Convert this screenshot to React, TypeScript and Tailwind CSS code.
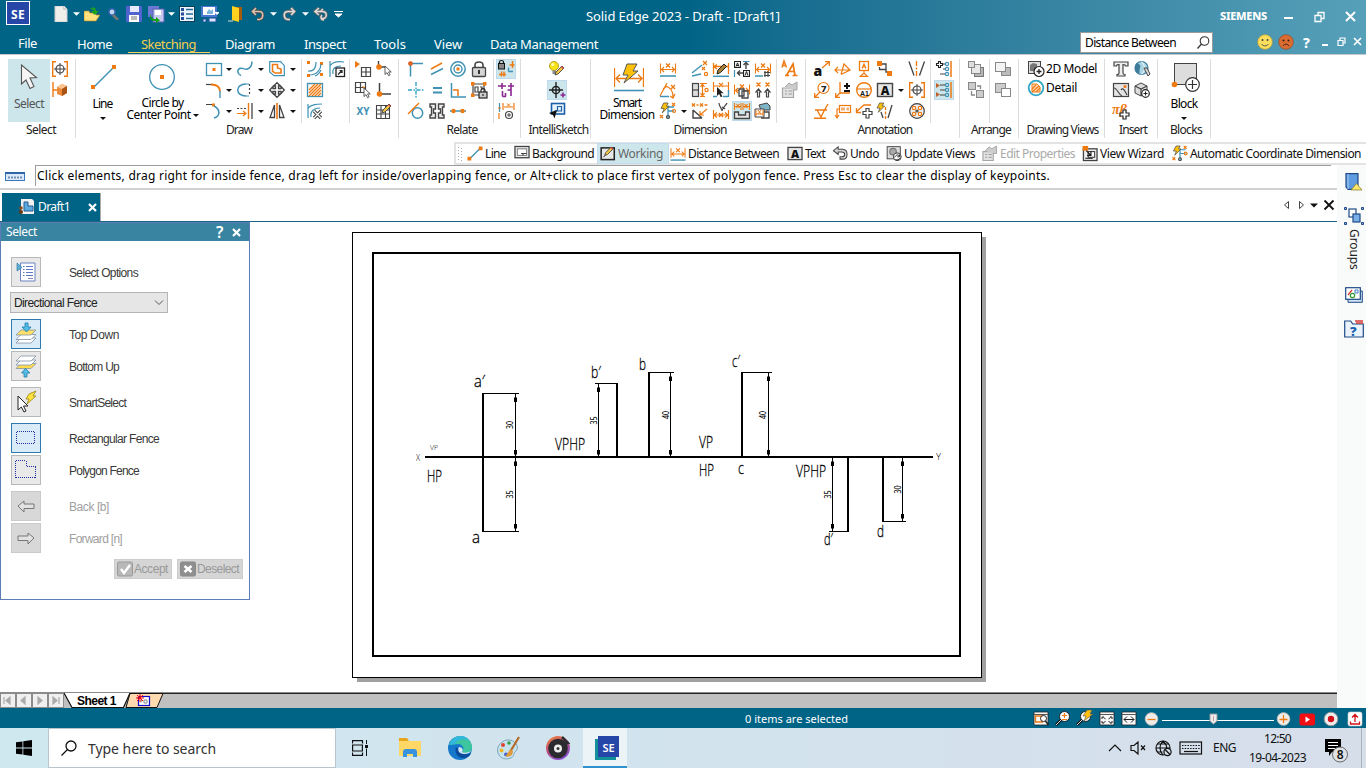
import React, { useLayoutEffect, useRef, useState } from "react";

const O = "#ee7a12";
const B = "#3f92b5";
const K = "#444444";

/* Label that adjusts its letter spacing so that it takes up `w` pixels. */
function Fit({ w, children, className = "" }: { w: number; children: string; className?: string }) {
  const ref = useRef<HTMLSpanElement>(null);
  const [sp, setSp] = useState(0);
  useLayoutEffect(() => {
    if (ref.current) {
      const natural = ref.current.getBoundingClientRect().width;
      setSp((w - natural) / children.length);
    }
  }, [w, children]);
  return (
    <span ref={ref} className={`inline-block whitespace-pre ${className}`} style={{ letterSpacing: sp }}>
      {children}
    </span>
  );
}

type PP = { d: string; c?: string; f?: string; w?: number; dash?: string };
const P = ({ d, c = B, f = "none", w = 1.2, dash }: PP) => (
  <path d={d} stroke={c} fill={f} strokeWidth={w} strokeDasharray={dash} />
);
const F = ({ d, c = O }: { d: string; c?: string }) => <path d={d} fill={c} />;
const C = ({ x, y, r, c = B, f = "none", w = 1.2 }: { x: number; y: number; r: number; c?: string; f?: string; w?: number }) => (
  <circle cx={x} cy={y} r={r} stroke={c} fill={f} strokeWidth={w} />
);

const CURSOR = "M0 0v10l2.4-2.2 1.8 3.6 1.8-.9-1.8-3.5h3.2z";
const Cursor = ({ x, y, s = 1 }: { x: number; y: number; s?: number }) => (
  <path d={CURSOR} transform={`translate(${x} ${y}) scale(${s})`} fill="#fff" stroke={K} strokeWidth={1} />
);
const Bolt = ({ x, y, s = 1 }: { x: number; y: number; s?: number }) => (
  <path d="M3 0h5L6 3.5h3L1.5 11l2-5H0z" transform={`translate(${x} ${y}) scale(${s})`} fill="#fdc10c" stroke="#444" strokeWidth={0.8} />
);
const Pencil = ({ x, y }: { x: number; y: number }) => (
  <g transform={`translate(${x} ${y})`}>
    <path d="M0 9l1-3L7 0l2 2-6 6z" fill="#f5c542" stroke="#444" strokeWidth={0.9} />
    <path d="M6 1l1-1 2 2-1 1z" fill="#d2434b" />
  </g>
);
const DimX = () => (
  <>
    <P d="M.5 2.5v10M15.5 2.5v10M1 8.5h14M4 6L1.5 8.5 4 11M12 6l2.500 2.500L12 11" c={O} w={1.1} />
    <P d="M6 2.500l4 4M10 2.500l-4 4" c={O} w={1.300} />
  </>
);

const icons: Record<string, React.ReactNode> = {
  alignSel: (<><P d="M4 .7H.7v14.600H4M12 .7h3.300v14.600H12" c={O} w={1.400} /><C x={8} y={8} r={4} c={K} /><P d="M8 2v12M2 8h12" c={K} w={1} /></>),
  boxSel: (<><P d="M1 0v15M1 8h4" c={O} w={1.400} /><F d="M5 5l5-3 5 2v7l-5 3-5-2z" c="#e98a3c" /><F d="M5 5l5-3 5 2-5 3z" c="#ffc48e" /><F d="M10 7l5-3v7l-5 3z" c="#a95312" /></>),
  rect: (<><rect x=".5" y="2.500" width="15" height="12" fill="none" stroke={B} strokeWidth={1.300} /><F d="M6.500 7h3v3h-3z" /></>),
  curve: (<P d="M4 14.500C0 13 0 9 2.500 7.500S8 9 10.500 8 15 5 15 .5" w={1.500} />),
  offset: (<><P d="M.7.7h11l3.600 4v10H5L.7 11z" /><P d="M3.500 3.500h5v3.500l3.500 1V12H6l-2.500-2z" c={O} w={1.600} /></>),
  fillet: (<><P d="M0 2.500h7" c={K} /><P d="M5 2.500c6 0 9 2 9 7" c={O} w={1.800} /><P d="M14 9v7" w={1.400} /></>),
  arcDash: (<><P d="M9 2C-2 2-2 14 9 14" w={1.500} /><P d="M9 2h3M9 14h3" w={1} /><P d="M12.500 2v12" c={K} dash="2 2" /></>),
  move: (<P d="M8 .7L4.500 4h2v2.500H4v-2L.7 8 4 11.500v-2h2.500V12h-2L8 15.300 11.500 12h-2V9.500H12v2L15.300 8 12 4.500v2H9.500V4h2z" c={K} w={1.300} />),
  arcEnd: (<><F d="M6 .5h3v3H6z" /><P d="M0 1.500h6" c={K} w={1} /><P d="M8 3c6 3 7 10 0 12" w={1.600} /></>),
  extend: (<><P d="M0 5.500h9" c={K} dash="2 1.500" w={1.200} /><P d="M0 10.500h8M6 8l3 2.500L6 13" c={O} /><P d="M11.500 0v16" c={O} w={1.400} /><P d="M15 0v16" c={K} w={1.300} /></>),
  mirror: (<><P d="M8 0v16" c={O} w={1.600} /><P d="M5.500 2v12.500H1zM10.500 2v12.500H15z" c={K} w={1.300} /></>),
  convert: (<><F d="M0 0h3v3H0zM13 1h3v3h-3zM0 13h3v3H0zM13 12h3v3h-3z" /><P d="M1 10c7 1 8-5 8-9M3 14c7 0 11-6 11-11M8 15c3-1 5-4 6-6" /></>),
  scale: (<><P d="M1 0v16M1 5C4 0 9 0 15 1M4 13C3 7 7 5 12 5" /><rect x="7" y="7" width="8.500" height="8.500" fill="#fff" stroke="#222" strokeWidth={1.300} /><P d="M9 13.500l4-4M10.500 9.500H13V12" c="#222" w={1.200} /></>),
  hatch: (<><rect x=".5" y="1.500" width="15" height="13" fill="#fff3e8" stroke={B} strokeWidth={1.300} /><P d="M2 8l6-6M2 11l9-9M2 14l12-12M5 14l9-9M8 14l6-6M11 14l3-3" c={O} w={1.200} /></>),
  cleanX: (<><P d="M1 1v14M1 5c4-4 9-4 14-4M4 14C3 8 7 5 13 5" /><P d="M7 8l7 7M14 8l-7 7" c={K} w={3.200} /><P d="M7 8l7 7M14 8l-7 7" c="#fff" w={1.200} /></>),
  gridPt: (<><F d="M0 0l5 3-5 4z" /><P d="M6.500 6.500h9v9h-9zM11 6.500v9M6.500 11h9" c={K} w={1.200} /></>),
  ptCur: (<><P d="M2.500 0v6M4 6h6" c={K} w={1.400} /><C x={3} y={6} r={2.200} c={O} f={O} /><Cursor x={9} y={5} s={0.850} /></>),
  gridCur: (<><P d="M.5.5h10v10H.5zM5.500.5v10M.5 5.500h10" c={K} w={1.200} /><F d="M7 4l3 1-1 2z" /><Cursor x={9} y={6} s={0.850} /></>),
  ptL: (<><P d="M3.500 1v9M5 12h10" c={K} w={1.500} /><C x={3.500} y={12} r={2.200} c={O} f={O} /></>),
  gridPen: (<><P d="M.5 2.500h13v13H.5zM5 2.500v13M9.500 2.500v13M.5 7h13M.5 11h13" c={K} w={1.100} /><Pencil x={6} y={1} /></>),
  rConn: (<><P d="M2.500 2.500v13M2.500 2.500H15" w={1.500} /><C x={2.500} y={2.500} r={1.700} c="#d9531e" f={O} /></>),
  rPar: (<><P d="M2 8L13 2" c={O} w={1.500} /><P d="M2 13.500l12-6" w={1.500} /></>),
  rConc: (<><C x={8} y={8} r={7.200} w={1.500} /><C x={8} y={8} r={4} w={1.400} /><F d="M6.500 6.500h3v3h-3z" /></>),
  lock: (<><P d="M4 7V4c0-4 8-4 8 0v3" c={K} w={1.600} /><rect x="1.500" y="6.500" width="13" height="9" rx="1" fill="#d5d5d5" stroke={K} strokeWidth={1.300} /><P d="M8 9v4" c="#222" w={1.800} /></>),
  rHV: (<><P d="M8 0v16M0 8h16" dash="4 1.500 1.500 1.500" w={1.400} c="#2fa5c6" /></>),
  rEq: (<P d="M4 6h9M4 10.500h9" w={2} />),
  rPerp: (<><P d="M1.500 1v14H16" w={1.500} /><P d="M3 8h5v6" c={O} w={1.500} /></>),
  rigid: (<><P d="M2 2h11v11H2z" c={K} w={1.200} /><F d="M0 0h3.500v3.500H0zM12 0h3.500v3.500H12zM0 11.500h3.500V15H0z" /><P d="M4 5h3v5H4zM9 5h2v3" c={K} /><rect x="8" y="10" width="8" height="6" fill="#ccc" stroke="#222" strokeWidth={1.200} /><P d="M10 10V8c0-2 4-2 4 0v2M12 12v2" c="#222" w={1.200} /></>),
  rTan: (<><C x={9.500} y={10} r={5.200} w={1.500} /><P d="M0 11L11 0" c={O} w={1.500} /></>),
  rSym: (<><path d="M1 1h5.500v5h-2v4h2v5H1v-3h1.500V4H1zM15 1H9.500v5h2v4h-2v5H15v-3h-1.500V4H15z" fill="#eee" stroke={K} strokeWidth={1.400} /></>),
  rCol: (<><P d="M0 8h16" w={1.500} /><C x={3.500} y={8} r={1.600} c={O} f={O} /><C x={12.500} y={8} r={1.600} c={O} f={O} /></>),
  mRel: (<><rect x=".5" y="2.500" width="6" height="5.500" fill="#888" stroke="#111" /><P d="M1.500 3V1c0-2 4-2 4 0v2" c="#111" w={1.200} /><P d="M10.500 10.500v-4M10.500 10.500h4.500" c={B} w={1.400} /><P d="M14.500 0v7M11.500 4h5M1 13.500h7M3.500 10.500v5M6 10.500v5" c={O} w={1.500} /></>),
  relH: (<><P d="M4 1v6M0 4h8M13 1v13M10 4h6M4.500 9v5.500M4.500 14.500H8M7.500 11v3.500M13 8H9.500" c="#8a2790" w={1.600} /></>),
  dimPlus: (<><P d="M1.500 0v9" w={1.200} /><P d="M0 5h3M5 0v7M16 0v7M6 4h9M1 10v6" c={O} w={1.200} /><P d="M9 .5l3 3M12 .5l-3 3" c={O} w={1} /><C x={11} y={12} r={3.500} c={K} /><P d="M9 12h4M11 10v4" c={K} w={1} /></>),
  bulb: (<><circle cx="5" cy="5" r="4.500" fill="#f7e11d" stroke="#b9a31a" /><circle cx="3.700" cy="3.500" r="1.500" fill="#fffbb5" /><rect x="3.500" y="9.500" width="3.500" height="3.500" fill="#888" /><Pencil x={6} y={5} /></>),
  aim: (<><C x={7} y={8} r={3.600} c="#222" w={1.500} /><P d="M7 0v16M0 8h14" c="#222" w={1.400} /><P d="M11.500 13h5M14 10.500v5" c="#8a2790" w={1.600} /></>),
  skView: (<><rect x="2.500" y=".5" width="13" height="10.500" fill="#e8f2fa" stroke="#1d5fa8" strokeWidth={1.600} /><P d="M5.500 8h7V3.500h-4v4" c="#1d5fa8" /><F d="M0 10l8-3-2.500 8.500L4 12z" c="#111" /></>),
  dist: (<><DimX /><P d="M0 15h16" w={1.500} /></>),
  between: (<><P d="M0 12L10 4" w={1.400} /><P d="M0 15l9-2" w={1.400} /><P d="M11 0l4 4M15 0l-4 4" c={O} w={1.300} /><P d="M10 6l3 3M13 6l-3 3" c={O} w={1.100} /><C x={14} y={13} r={1.600} c={O} /></>),
  dimPen: (<><P d="M.5 2v11M15.500 2v11M1 5.500h14M4 3.500L1 5.500l3 2.500" c={O} w={1.300} /><P d="M0 15.300h16" w={1.500} /><path d="M4 13l1-4 6-6 2.500 2.500-6 6z" fill="#a8813a" stroke="#222" /></>),
  textA: (<><rect x=".5" y=".5" width="6" height="6" fill="#eee" stroke="#222" /><P d="M2 5.500L3.500 2 5 5.500M2.500 4.500h2" c="#222" w={1} /><rect x="9.500" y="9.500" width="6" height="6" fill="#eee" stroke="#222" /><P d="M11 14.500l1.500-4 1.500 4" c="#222" w={1} /><P d="M12 8V2M9.500 4L12 1.500 14.500 4M3 12h6M6 9.500L3.500 12 6 14.500" c={K} w={1.400} /><P d="M.5 9v7M9 .5h6.500" /></>),
  dimGrid: (<><DimX /><P d="M0 15h8" w={1.500} /><P d="M10 10v6M13 10v6M9 11.500h6M9 14.500h6" c={K} w={1.200} /></>),
  angle: (<><P d="M0 14L7 1" c={O} /><P d="M0 14.500h9" w={1.500} /><P d="M5 4c5 1 8 5 8 11M3 7l4-3M10 14l3 2 2-4" c={O} /><P d="M11 3l4 4M15 3l-4 4" c={O} w={1.400} /></>),
  dia: (<><rect x=".5" y="1.500" width="6" height="13" fill="#ddd" stroke={K} strokeWidth={1.200} /><P d="M1 8h6" c={K} /><P d="M8 1.500h7M8 14.500h5M10.500 2v12M8.500 5l2-3 2 3M8.500 11l2 3 2-3" c={O} w={1.200} /><C x={14.500} y={8} r={1.600} c={O} /></>),
  dimCur: (<><P d="M.5 0v10M15.500 0v10M1 4h14M6 1l4 4M10 1L6 5" c={O} /><P d="M0 14.500h4M10 14.500h5M15.500 8v7" w={1.400} /><path d={CURSOR} transform="translate(4 5) scale(.9)" fill="#222" /></>),
  dimCopy: (<><DimX /><path d="M5 7h5v7H5zM8 9h6v7H8z" fill="#fff" stroke={K} strokeWidth={1.300} /></>),
  xx: (<><P d="M1.500.5l4 4M5.500.5l-4 4M10.500.5l4 4M14.500.5l-4 4" c={O} w={1.300} /><P d="M3.500 7L1 10h1.500v5h2v-5H6zM12.500 7L10 10h1.500v5h2v-5H15z" c={K} w={1.200} /></>),
  auto: (<><P d="M8 3v12M8 4h6M8 8h6" w={1.300} /><Bolt x={1} y={0} s={0.900} /><P d="M12 0l3 3M15 0l-3 3M0 12l3 3M3 12l-3 3" c={O} w={1.200} /><C x={14} y={8} r={1.500} c={O} /><C x={8} y={14} r={1.500} c={K} /></>),
  chamfer: (<><P d="M0 .5l3 3M3 .5l-3 3M4.500 2h2M8 .5l3 3M11 .5l-3 3M12.500 2h3" c={O} w={1.400} /><P d="M1 7v8h9M1 7l9 8" c={K} w={1.400} /><P d="M15 6l-7 6M8 8v4h4" c={O} /></>),
  dimBrk: (<><P d="M.5 7v9M15.500 7v9M1 12h14M4 9.500L1 12l3 2.500M12 9.500l3 2.500-3 2.500M6 10l4 4M10 10l-4 4" c={O} w={1.200} /><P d="M6 0c0 4 3 5 3 8M14 0c-1 3-5 4-5 8M9 4l3 2" c={K} /></>),
  dimSlot: (<><P d="M.5 0v7M7 0v7M1 3.500h6M9 0v7M15.500 0v7M9 3.500h6M2.500 1l3 4M5.500 1l-3 4M10.500 1l3 4M13.500 1l-3 4" c={O} w={1.100} /><path d="M.5 9h4v3h7V9h4v6.500H.5z" fill="#e5e5e5" stroke={K} strokeWidth={1.300} /></>),
  dimTree: (<><path d="M4 2l8-2 3 3v4H6z" fill="#7fb4c6" stroke={K} /><path d="M0 6h9v8H0z" fill="#fff" stroke={K} /><P d="M1 7v6M8 7v6M1 11h7M3 7l3 4M6 7l-3 4" c={O} w={1} /><path d="M9 9h5v6H6" fill="none" stroke={K} strokeWidth={1.400} /></>),
  aA: (<><P d="M0 6.500L2 0l2.500 6.500M1 4.500h3" c={O} w={1.500} /><P d="M4.500 14.500L11 3l2 11.500M7.500 10.500h5M3 14.500h4M10.500 14.500H15.500" c={O} w={1.700} /></>),
  props: (<><path d="M.5 6h11v9.500H.5z" fill="#e2e2e2" stroke="#a5a5a5" strokeWidth={1.200} /><path d="M3 5l4-4 3 2 5-3v8h-4" fill="#ccc" stroke="#a5a5a5" /><P d="M3 9h2M3 12h2M6.500 9H10M6.500 12H10" c="#999" /></>),
  leader: (<><text x="-.5" y="15" fontSize="14" fontWeight="900" fontFamily="Noto Sans" fill="#111">a</text><P d="M8 7l7-6M11 .7h4.300V5" c={O} w={1.300} /></>),
  datum: (<><P d="M0 9h14.500M3 6L0 9l3 3M6 13.500L9 3l6 6-9 4.500" c={O} /></>),
  datumA: (<><rect x="3.500" y=".5" width="9" height="9" fill="none" stroke={O} strokeWidth={1.300} /><P d="M6 7.500L8 3l2 4.500M6.500 6h3" c={O} /><P d="M8 9v4M4.500 15.300L8 12l3.500 3.300z" c={O} /></>),
  conn: (<><F d="M0 0h5v5H0zM10 10h5v5h-5z" /><P d="M5 3h4v8h1M2.500 6v2.500H9" c={K} w={1.300} /></>),
  centerl: (<><P d="M0 .5l5 14M15.500.5l-5 14" c={K} w={1.300} /><P d="M7.500 0v16" c={O} dash="5 1.500 2 1.500" w={1.400} /></>),
  balloon: (<><C x={9.500} y={6} r={5.500} c={O} /><text x="7" y="9.500" fontSize="9.500" fontWeight="800" fontFamily="Noto Sans" fill="#222">7</text><P d="M6 10l-5 5M.7 11v4.300H5" c={O} w={1.300} /></>),
  tol: (<><P d="M5 0v12M1 15l4-4h10M.7 11v4.300H5" c={O} w={1.300} /><P d="M9 4h6M12 1v6M9 9h6" c="#111" w={2} /></>),
  a1: (<><C x={8} y={8} r={7.300} c={O} w={1.400} /><P d="M1 7h14" c={O} /><text x="4" y="14" fontSize="7" fontWeight="800" fontFamily="Liberation Sans" fill="#111">A1</text></>),
  boxA: (<><rect x=".5" y="1.500" width="15" height="13" fill="#e6e6e6" stroke={K} strokeWidth={1.400} /><text x="3.800" y="12.500" fontSize="12" fontWeight="900" fontFamily="Noto Sans" fill="#111">A</text></>),
  weld: (<><P d="M1 7h12M3 7l4 7 3.500-7L14 1M0 15.300h12" c={O} w={1.400} /></>),
  fcf: (<><rect x="4.500" y="2.500" width="11" height="7" fill="none" stroke={O} strokeWidth={1.200} /><P d="M7 4.500v3M9 4.500v3M11 6h.8M13 4.500v3" c={O} w={1.200} /><P d="M4 6H2v9M0 12l2 3 2-3" c={O} /></>),
  leadPlus: (<><P d="M15 2H8L0 9M.5 5v4.500H5" c={O} w={1.300} /><path d="M10 5.500h3v3h3v3h-3v3.500h-3v-3.500H7v-3h3z" fill="#fff" stroke={K} strokeWidth={1.200} /></>),
  autoCl: (<><P d="M4 9l2 6M15 2l-4 13" c={K} w={1.300} /><P d="M8.500 4v12" c={O} dash="3 1.500" w={1.400} /><Bolt x={0} y={0} s={0.850} /></>),
  boltc: (<><C x={8} y={8} r={7.300} c={K} f="#eee" /><C x={5} y={5} r={1.700} c={O} f="#fff" /><C x={11} y={5} r={1.700} c={O} f="#fff" /><C x={5} y={11} r={1.700} c={O} f="#fff" /><C x={11} y={11} r={1.700} c={O} f="#fff" /><C x={8} y={8} r={1} c={K} /></>),
  sysP: (<><path d="M2.500.5h2v2h2v2h-2v2h-2v-2h-2v-2h2z" fill="#fff" stroke="#222" strokeWidth={1.100} /><P d="M7 3h3M7 8h3M4 13h6" c={K} w={1.200} /><C x={11} y={3} r={1.600} /><C x={11} y={8} r={1.600} /><C x={11} y={13} r={1.600} /><P d="M15 0v16" c={O} w={1.500} /></>),
  sysC: (<><F d="M0 1l4 2.500L0 6zM0 10l4 2.500L0 15z" c="#c2622a" /><P d="M4 3h6M4 8h6M4 13h6" c={K} w={1.200} /><C x={11} y={3} r={1.600} /><C x={11} y={8} r={1.600} /><C x={11} y={13} r={1.600} /><P d="M15 0v16" c={O} w={1.500} /></>),
  arr1: (<><rect x="6.500" y="6.500" width="9" height="9" fill="#b5b5b5" stroke="#777" /><rect x="3.500" y="3.500" width="9" height="9" fill="#e8e8e8" stroke="#888" /><rect x=".5" y=".5" width="6" height="6" fill="#ddd" stroke="#888" /></>),
  arr2: (<><rect x="6.500" y="6.500" width="9" height="8" fill="#bbb" stroke="#888" /><rect x=".5" y="1.500" width="10" height="9" fill="#f3f3f3" stroke="#888" /></>),
  arr3: (<><rect x=".5" y=".5" width="7" height="7" fill="#ccc" stroke="#888" /><rect x="8.500" y="8.500" width="7" height="7" fill="#ccc" stroke="#888" /><P d="M9 4h3.500v3M3.500 9v4H7" c="#888" w={1.300} /></>),
  arr4: (<><rect x=".5" y="1.500" width="10" height="9" fill="#ccc" stroke="#888" /><rect x="6.500" y="6.500" width="9" height="8" fill="#fff" stroke="#888" /></>),
  model: (<><rect x=".5" y=".5" width="12" height="12" fill="#ddd" stroke={K} /><F d="M2 4l3-2 4 1v7H2z" c="#777" /><C x={11} y={10.500} r={5} c="#222" f="#fff" /><P d="M8.500 10.500h5M11 8v5" c="#222" w={1.300} /></>),
  detail: (<><C x={8} y={8} r={7.300} c="#2fa5c6" w={1.800} f="#fff" /><path d="M4 4h5l3 3v5H4z" fill="#ffd9b8" stroke={O} /><P d="M4 9l4-4M4 12l7-6M8 12l4-4" c={O} w={1.200} /></>),
  bigT: (<path d="M1 1h14v4h-2.500c0-1-1-1.500-2.500-1.500V12c0 1 .5 1.500 2 1.500V15H4v-1.500c1.500 0 2-.5 2-1.500V3.500C4.500 3.500 3.500 4 3.500 5H1z" fill="#eee" stroke={K} strokeWidth={1.200} />),
  globe: (<><C x={7.500} y={7} r={6.500} c="#3d7c9b" f="#a8d4e4" /><path d="M3 2c3 1 4 3 3 5s0 4-1 6C0 10 0 5 3 2z" fill="#3d7c9b" /><P d="M7.500.5c4 4 4 9 0 13" c="#fff" w={0.900} /><path d="M10 7l3 0 3 6-2 2z" fill="#ddd" stroke={K} /></>),
  image: (<><rect x=".5" y="1.500" width="15" height="13" fill="#e4e4e4" stroke={K} strokeWidth={1.200} /><P d="M1 6c3 0 5 7 8 8M8 8c2-3 4 1 6 5" c={K} /><C x={12} y={4.500} r={1} c={O} f={O} /></>),
  cube: (<><path d="M1 4l6-3 6 3v7l-6 3-6-3z" fill="#ddd" stroke={K} /><P d="M1 4l6 3 6-3M7 7v7" c={K} /><C x={11.500} y={11.500} r={3.800} c="#222" f="#fff" /><P d="M9.500 11.500h4M11.500 9.500v4" c="#222" w={1} /></>),
  pib: (<><text x="-1" y="11" fontSize="14" fontStyle="italic" fontWeight="700" fontFamily="Liberation Serif" fill={O}>πβ</text><path d="M10 7h3v3h3v3h-3v3h-3v-3H7v-3h3z" fill="#fff" stroke="#222" strokeWidth={1.200} /></>),
  bgIc: (<><rect x=".5" y=".5" width="15" height="12" fill="#eee" stroke={K} strokeWidth={1.400} /><rect x="3" y="3" width="10" height="7" fill="#fff" stroke="#777" /><P d="M7 8h6M9 8v2" c={K} /></>),
  working: (<><rect x=".7" y="2" width="14" height="12.500" fill="#e6e6e6" stroke="#222" strokeWidth={1.600} /><P d="M3 12l9-9" c="#222" w={1} /><Pencil x={4.500} y={1} /></>),
  undo: (<><path d="M6 1L1 5l5 4V6.500h4c4 0 4 5 0 5H8v2.500h3c6 0 6-10 0-10.500H6z" fill="#d8d8d8" stroke={K} strokeWidth={1.100} /></>),
  upd: (<><rect x=".7" y=".7" width="14" height="13" fill="#ddd" stroke={K} /><C x={7} y={6} r={3.500} c="#777" f="#aaa" /><C x={11.500} y={11.500} r={4} c={K} f="#fff" /><P d="M9 12c1-3 4-3 5-1M14 9v2.500h-2.500M9.500 14.500c2 1 4 0 4.500-1.500" c="#222" w={1} /></>),
  wiz: (<><rect x="1" y="3" width="14.500" height="12.500" fill="#eee" stroke={K} strokeWidth={1.400} /><F d="M0 0h6v5H0z" /><rect x="6" y="6" width="7" height="6" fill="#fff" stroke="#222" /><P d="M4 5l5 5M9 6v4H5M3 13h8" c="#111" w={1.200} /></>),
  line: (<><P d="M3 13L13 3" w={1.400} /><F d="M0 11.500h4v4H0zM12 .5h4v4h-4z" /></>),
};

const I = ({ n, className = "h-4 w-4" }: { n: string; className?: string }) => (
  <svg viewBox="0 0 16 16" className={`shrink-0 overflow-visible ${className}`}>{icons[n]}</svg>
);
const Dn = ({ light = false }: { light?: boolean }) => (
  <svg viewBox="0 0 6 3" className={`shrink-0 ${light ? "h-[4px] w-[7px]" : "h-[3px] w-[6px]"}`}>
    <path d="M0 0h6L3 3z" fill={light ? "#fff" : "#111"} />
  </svg>
);
/* Icon cell: "*" before a name means highlighted, "v" a drop-down arrow, "" an empty cell. */
const Cell = ({ n }: { n: string }) => {
  if (n === "") return <span />;
  if (n === "v") return <Dn />;
  if (n[0] === "*") return <span className="grid h-[20px] w-[20px] place-items-center border border-[#bdd9ee] bg-[#cde6eb]"><I n={n.slice(1)} /></span>;
  return <I n={n} />;
};
const Tools = ({ cols, items }: { cols: string; items: string[] }) => (
  <div className={`-mt-[0.5px] grid h-[63px] grid-rows-[21px_21px_21px] place-items-center ${cols}`}>
    {items.map((n, i) => <Cell key={i} n={n} />)}
  </div>
);
const Sep = () => <div className="h-16 w-px shrink-0 bg-[#dcdcdc]" />;
const Group = ({ width, label, lw, pad = "", children }: { width: string; label: string; lw: number; pad?: string; children: React.ReactNode }) => (
  <section className={`flex h-[79px] shrink-0 flex-col border-r border-[#dcdcdc] ${width}`}>
    <div className="flex h-[64px]">{children}</div>
    <div className={`flex h-[13px] items-center justify-center text-[12px] text-[#222] ${pad}`}><Fit w={lw}>{label}</Fit></div>
  </section>
);

const tabs: [string, number, string][] = [
  ["Home", 35, "ml-[77px]"], ["Sketching", 55, "ml-[29px]"], ["Diagram", 50, "ml-[29px]"], ["Inspect", 42, "ml-[29px]"],
  ["Tools", 32, "ml-[28px]"], ["View", 28, "ml-[28px]"], ["Data Management", 108, "ml-[28px]"],
];

function TitleBar() {
  return (
    <header className="h-[54px] bg-gradient-to-r from-[#006487] from-50% to-[#56a0b9] text-white">
      <div className="flex h-[30px] items-center">
        <div className="-mt-1 ml-[6px] flex h-6 w-6 items-center justify-center border border-white bg-[#2747a8] pt-[4px] text-[12px] font-bold"><Fit w={14}>SE</Fit></div>
        <div className="-mt-[2px] ml-[23px] grid h-[28px] grid-cols-[16px_14px_18px_24px_18px_26px_4px_28px_18px_34px_10px_20px_12px_20px_12px_22px] place-items-center">
          <svg viewBox="0 0 16 16" className="h-4 w-4"><path d="M2 0h9l3 3v13H2z" fill="#f1efec" stroke="#ccc" /><path d="M10 0v4h4" fill="#ccc" /></svg>
          <Dn light />
          <svg viewBox="0 0 16 16" className="h-4 w-4"><path d="M0 15V5h5l1 2h6v2h4l-4 6z" fill="#ffe27c" stroke="#a88016" strokeWidth=".6" /><path d="M6 3c4-3 6-1 6 2h3l-4.500 4L7 5h3c0-1-1-2-4-2z" fill="#1da31d" /></svg>
          <svg viewBox="0 0 12 12" className="h-3 w-3"><circle cx="5" cy="4" r="3.200" fill="#bdd7f1" stroke="#2b5fa8" strokeWidth="1.500" /><path d="M6 7l5 5" stroke="#777" strokeWidth="2.500" /></svg>
          <svg viewBox="0 0 16 16" className="h-4 w-4"><rect width="16" height="16" rx="1" fill="#5163ce" /><path d="M4 0h9v6H4z" fill="#e7e9ff" /><path d="M3 9h10v7H3z" fill="#fff" /><path d="M5 11h6M5 13h6" stroke="#777" /></svg>
          <svg viewBox="0 0 17 17" className="h-[17px] w-[17px]"><rect width="11" height="11" fill="#6d78d5" /><rect x="5" y="3" width="11" height="13" fill="#c5caed" stroke="#555fb4" /><rect x="7" y="4" width="6" height="5" fill="#fff" /><path d="M3 9c0 4 2 4 5 4v-2l4 3.500L8 17v-2c-5 0-6-2-6-6z" fill="#13a113" /></svg>
          <Dn light />
          <svg viewBox="0 0 16 16" className="h-4 w-4"><rect x=".5" y=".5" width="15" height="15" fill="#eef6fc" stroke="#063f56" /><path d="M7 3.500h7M7 8h7M7 12.500h7" stroke="#246b99" strokeWidth="1.500" /><path d="M2 2h3v3H2zM2 6.500h3v3H2zM2 11h3v3H2z" fill="#264c9c" /></svg>
          <svg viewBox="0 0 18 16" className="h-4 w-[18px]"><path d="M1 0h14v10H1z" fill="#fff" stroke="#4a76d2" strokeWidth="2" /><path d="M6 6l2-3 2 2 2-2v5H6z" fill="#78b4df" /><path d="M2 13h3v3H2zM8 12h7v4H8z" fill="#dbe8ff" stroke="#2850a0" /><path d="M13 6h6l-3 3z" fill="#fff" /></svg>
          <svg viewBox="0 0 16 16" className="h-4 w-4"><path d="M4 1h10v13H4z" fill="#a65b0c" /><path d="M4 0l7 2v14l-7-2z" fill="#ffd21f" /><path d="M0 15h5" stroke="#ddd" /></svg>
          <svg viewBox="0 0 14 14" className="h-[14px] w-[14px] shrink-0"><path d="M5 1L1.500 4.500 5 8M2 4.500h6c5 0 5 7 0 8H6" stroke="#4b4b4b" strokeWidth="3.300" fill="none" /><path d="M5 1L1.500 4.500 5 8M2 4.500h6c5 0 5 7 0 8H6" stroke="#d9c2ae" strokeWidth="1.600" fill="none" /></svg>
          <Dn light />
          <svg viewBox="0 0 14 14" className="h-[14px] w-[14px] shrink-0"><path d="M9 1l3.500 3.500L9 8M12 4.500H6c-5 0-5 7 0 8h2" stroke="#666" strokeWidth="3.300" fill="none" /><path d="M9 1l3.500 3.500L9 8M12 4.500H6c-5 0-5 7 0 8h2" stroke="#ddd" strokeWidth="1.600" fill="none" /></svg>
          <Dn light />
          <svg viewBox="0 0 16 14" className="h-[14px] w-4 shrink-0"><path d="M6 1L2 4.500 6 8M10 2L7 5M3 4.500h6c6 0 5 7 1 7H8M11 13c-3 0-4-3-2-5" stroke="#666" strokeWidth="3.200" fill="none" /><path d="M6 1L2 4.500 6 8M10 2L7 5M3 4.500h6c6 0 5 7 1 7H8M11 13c-3 0-4-3-2-5" stroke="#ddd" strokeWidth="1.500" fill="none" /></svg>
          <svg viewBox="0 0 9 7" className="h-[7px] w-[9px]"><path d="M0 .5h9M1 3h7L4.500 6z" stroke="#fff" fill="#fff" /></svg>
        </div>
        <div className="ml-[237px] mt-[3px] text-[13px]"><Fit w={194}>Solid Edge 2023 - Draft - [Draft1]</Fit></div>
        <div className="ml-[440px] mt-[1px] text-[11px] font-extrabold"><Fit w={47}>SIEMENS</Fit></div>
        <svg viewBox="0 0 76 14" className="ml-[16px] mt-1 h-[14px] w-[76px]" fill="none" stroke="#fff">
          <path d="M1 8h9" strokeWidth="2" /><path d="M32 5.500h6v6h-6zM35 5V2.500h6v6h-3" strokeWidth="1.300" /><path d="M63 2l9 9M72 2l-9 9" strokeWidth="2" />
        </svg>
      </div>
      <div className="flex h-6 text-[13px]">
        <nav className="flex w-[1080px] pt-[8px]">
          <div className="-mt-px ml-[18px] w-0"><Fit w={19}>File</Fit></div>
          {tabs.map(([t, w, ml], i) => (
            <div key={t} className={`h-[13px] ${i === 0 ? "ml-[59px]" : ml} ${i === 1 ? "relative text-[#f4cd4e] after:absolute after:-left-[13px] after:top-[14px] after:h-px after:w-[82px] after:bg-[#f2cf57]" : ""}`}>
              <Fit w={w}>{t}</Fit>
            </div>
          ))}
        </nav>
        <div className="mt-[2px] flex h-[21px] w-[133px] items-center justify-between border border-[#9a9a9a] bg-white pl-[4px] pr-[2px] text-[12px] text-black">
          <Fit w={91}>Distance Between</Fit>
          <svg viewBox="0 0 13 13" className="h-[13px] w-[13px]"><circle cx="7.500" cy="5" r="4.300" fill="none" stroke="#333" strokeWidth="1.100" /><path d="M4.500 8L.5 12.500" stroke="#333" strokeWidth="1.300" /></svg>
        </div>
        <svg viewBox="0 0 110 20" className="ml-[43px] mt-[2px] h-5 w-[110px]">
          <circle cx="9" cy="10" r="7.300" fill="#fbdf5c" stroke="#c79f2c" strokeWidth=".7" /><circle cx="6.500" cy="8" r="1" fill="#444" /><circle cx="11.500" cy="8" r="1" fill="#444" /><path d="M5.500 12c2 2.500 5 2.500 7 0" stroke="#555" fill="none" />
          <circle cx="30" cy="10" r="7.300" fill="#d96c33" stroke="#9e471c" strokeWidth=".7" /><circle cx="27.500" cy="8.500" r="1" fill="#3c1c0c" /><circle cx="32.500" cy="8.500" r="1" fill="#3c1c0c" /><path d="M27 14c2-2.500 4-2.500 6 0" stroke="#3c1c0c" fill="none" />
          <text x="47" y="15.500" fontSize="14" fontWeight="800" fontFamily="Noto Sans" fill="#fff">?</text>
          <path d="M66 13h6" stroke="#fff" strokeWidth="2" /><path d="M82 8.500h5v5h-5zM84 8V6h5v5h-2" stroke="#fff" strokeWidth="1.200" fill="none" /><path d="M98 6l7 7M105 6l-7 7" stroke="#fff" strokeWidth="1.700" />
        </svg>
      </div>
    </header>
  );
}

function Ribbon() {
  return (
    <div className="flex h-[88px] border-t border-[#c5c9cb] bg-white pt-1">
      <Group width="w-[76px]" label="Select" lw={30} pad="pl-[7px]">
        <div className="ml-2 flex h-[63px] w-[42px] flex-col items-center bg-[#cde6eb] text-[12px] text-[#555]">
          <svg viewBox="0 0 18 26" className="mt-[5px] h-[26px] w-[18px] shrink-0"><path d="M1.500 1v19l4.500-4 4 8.500 4-2-4-8.500 6.500-.5z" fill="#f6f6f6" stroke="#555" strokeWidth="1.100" /></svg>
          <div className="mt-[8px]"><Fit w={30}>Select</Fit></div>
        </div>
        <Tools cols="grid-cols-[20px]" items={["alignSel", "boxSel", ""]} />
      </Group>
      <Group width="w-[323px]" label="Draw" lw={26} pad="pl-[4px]">
        <div className="ml-[12px] flex w-[29px] flex-col items-center text-[12px]">
          <svg viewBox="0 0 26 26" className="ml-[3px] mt-[5px] h-[26px] w-[26px] shrink-0"><path d="M3 23L23 3" stroke={B} strokeWidth="1.400" /><path d="M0 21h4v4H0zM21 1h4v4h-4z" fill={O} /></svg>
          <div className="mt-[8px]"><Fit w={20}>Line</Fit></div>
          <span className="mt-[7px] flex"><Dn /></span>
        </div>
        <div className="ml-[8px] flex w-[75px] flex-col items-center text-[12px]">
          <svg viewBox="0 0 26 26" className="-ml-[2px] mt-[5px] h-[26px] w-[26px] shrink-0"><circle cx="13" cy="13" r="12.300" fill="none" stroke={B} strokeWidth="1.300" /><path d="M11 11h4v4h-4z" fill={O} /></svg>
          <div className="mt-[7px] flex"><Fit w={42}>Circle by</Fit></div>
          <div className="flex items-center gap-[2px]"><Fit w={64}>Center Point</Fit><Dn /></div>
        </div>
        <div className="ml-[6px]">
          <Tools cols="grid-cols-[16px_14px_18px_14px_18px_14px]" items={["rect", "v", "curve", "v", "offset", "v", "fillet", "v", "arcDash", "v", "move", "v", "arcEnd", "v", "extend", "v", "mirror", "v"]} />
        </div>
        <div className="ml-px"><Sep /></div>
        <div className="ml-[2.5px]"><Tools cols="grid-cols-[21px_23px]" items={["convert", "scale", "hatch", "", "cleanX", ""]} /></div>
        <div className="ml-[0.5px]"><Sep /></div>
        <div className="-mt-[0.5px] ml-[3px] grid h-[63px] grid-cols-[20px_22px] grid-rows-3 place-items-center">
          <I n="gridPt" /><I n="ptCur" /><I n="gridCur" /><I n="ptL" />
          <span className="text-[10px] font-bold text-[#3f92b5]"><Fit w={13}>XY</Fit></span><I n="gridPen" />
        </div>
      </Group>
      <Group width="w-[122px]" label="Relate" lw={31} pad="pl-[5px]">
        <div className="ml-[6.5px]"><Tools cols="grid-cols-[21px_21px_21px_21px]" items={["rConn", "rPar", "rConc", "lock", "rHV", "rEq", "rPerp", "rigid", "rTan", "rSym", "rCol", ""]} /></div>
        <div className="ml-[3.5px]"><Sep /></div>
        <div className="ml-[1.5px]"><Tools cols="grid-cols-[21px]" items={["*mRel", "relH", "dimPlus"]} /></div>
      </Group>
      <Group width="w-[70px]" label="IntelliSketch" lw={60} pad="pl-[6px]">
        <div className="ml-[25.5px]"><Tools cols="grid-cols-[21px]" items={["bulb", "*aim", "skView"]} /></div>
      </Group>
      <Group width="w-[215px]" label="Dimension" lw={53} pad="pl-[4px]">
        <div className="ml-[8px] flex w-[56px] flex-col items-center text-[12px]">
          <svg viewBox="0 0 30 29" className="ml-[3px] mt-[4px] h-[29px] w-[30px] shrink-0"><path d="M.5 5v19M29.500 5v19M2 15.500h26M6 11.500l-4 4 4 4M24 11.500l4 4-4 4" stroke={O} strokeWidth="1.300" fill="none" /><path d="M0 27.500h30" stroke={B} strokeWidth="1.600" /><path d="M13 1h10l-4 7h5L10 20l4-8h-5z" fill="#fdc10c" stroke="#555" /></svg>
          <div className="mt-[5px] flex"><Fit w={28}>Smart</Fit></div>
          <div className="flex"><Fit w={55}>Dimension</Fit></div>
        </div>
        <div className="ml-[3px]">
          <Tools cols="grid-cols-[20px_12px_20px_22px_20px_22px]" items={["dist", "", "between", "dimPen", "textA", "dimGrid", "angle", "", "dia", "dimCur", "dimCopy", "xx", "auto", "v", "chamfer", "dimBrk", "*dimSlot", "dimTree"]} />
        </div>
        <div className="ml-[2px]"><Sep /></div>
        <div className="ml-[2.5px]"><Tools cols="grid-cols-[21px]" items={["aA", "props", ""]} /></div>
      </Group>
      <Group width="w-[154px]" label="Annotation" lw={55} pad="pl-[5px]">
        <div className="ml-[5px]">
          <Tools cols="grid-cols-[22px_20px_22px_20px_12px_20px]" items={["leader", "datum", "datumA", "conn", "", "centerl", "balloon", "tol", "a1", "boxA", "v", "alignSel", "weld", "fcf", "leadPlus", "autoCl", "", "boltc"]} />
        </div>
        <div className="ml-[3px]"><Sep /></div>
        <div className="ml-[2.5px]"><Tools cols="grid-cols-[21px]" items={["sysP", "*sysC", ""]} /></div>
      </Group>
      <Group width="w-[59px]" label="Arrange" lw={40} pad="pl-[4px]">
        <div className="ml-[5px]"><Tools cols="grid-cols-[22px]" items={["arr1", "arr3", ""]} /></div>
        <div className="ml-[2px]"><Sep /></div>
        <div className="ml-[2px]"><Tools cols="grid-cols-[22px]" items={["arr2", "arr4", ""]} /></div>
      </Group>
      <Group width="w-[86px]" label="Drawing Views" lw={72} pad="pl-[2px]">
        <div className="ml-[9px] flex flex-col text-[12px]">
          <div className="flex h-[20px] items-center gap-[2px]"><I n="model" /><Fit w={51}>2D Model</Fit></div>
          <div className="flex h-[18px] items-center gap-[2px]"><I n="detail" /><Fit w={31}>Detail</Fit></div>
        </div>
      </Group>
      <Group width="w-[53px]" label="Insert" lw={28} pad="pl-[4px]">
        <div className="ml-[5px]"><Tools cols="grid-cols-[22px_20px]" items={["bigT", "globe", "image", "cube", "pib", ""]} /></div>
      </Group>
      <Group width="w-[53px]" label="Blocks" lw={32} pad="pl-[4px]">
        <div className="flex w-[53px] flex-col items-center text-[12px]">
          <svg viewBox="0 0 30 30" className="ml-[3px] mt-[3px] h-[30px] w-[30px] shrink-0"><rect x="3.500" y="1.500" width="22" height="21" fill="#ddd" stroke={K} /><circle cx="3.500" cy="22.500" r="2.800" fill={O} /><circle cx="21.500" cy="22.500" r="6.800" fill="#fff" stroke="#333" strokeWidth="1.200" /><path d="M17 22.500h9M21.500 18v9" stroke="#333" strokeWidth="1.200" /></svg>
          <div className="mt-[6px]"><Fit w={27}>Block</Fit></div>
          <span className="mt-[7px] flex"><Dn /></span>
        </div>
      </Group>
    </div>
  );
}

const cmds: [string, string, number, string][] = [
  ["line", "Line", 21, "w-[47px]"], ["bgIc", "Background", 62, "w-[84px]"], ["working", "Working", 45, "w-[70px]"],
  ["dist", "Distance Between", 91, "w-[117px]"], ["boxA", "Text", 20, "w-[45px]"], ["undo", "Undo", 29, "w-[54px]"],
  ["upd", "Update Views", 71, "w-[96px]"], ["props", "Edit Properties", 75, "w-[100px]"], ["wiz", "View Wizard", 64, "w-[90px]"],
  ["auto", "Automatic Coordinate Dimension", 171, "w-[191px]"],
];

function CommandBar() {
  return (
    <div className="flex h-[23px] justify-end bg-white">
      <div className="flex h-[23px] w-[912px] items-center border-2 border-r-0 border-[#e3e3e3] text-[12px] text-[#111]">
        <svg viewBox="0 0 7 14" className="ml-px h-[14px] w-[7px] shrink-0"><path d="M1.500 0v14M4.500 1v13" stroke="#aaa" strokeDasharray="1 2" /></svg>
        <span className="w-[3px] shrink-0" />
        {cmds.map(([ic, t, w, cls]) => (
          <div key={t} className={`flex h-[19px] shrink-0 items-center gap-[2px] ${cls} ${t === "Working" ? "mr-[2px] bg-[#cde6eb] pl-[2px] text-[#666] outline outline-1 outline-[#c2dcf2]" : ""} ${t === "Edit Properties" ? "text-[#aaa]" : ""}`}>
            <I n={ic} className="h-[15px] w-4" />
            <Fit w={w}>{t}</Fit>
          </div>
        ))}
      </div>
    </div>
  );
}

type Btn = { n: string; label: string; w: number; mt: string; st?: "on" | "off" };
const btns: Btn[] = [
  { n: "opt", label: "Select Options", w: 69, mt: "mt-[16px]" },
  { n: "top", label: "Top Down", w: 50, mt: "mt-[6px]", st: "on" },
  { n: "bot", label: "Bottom Up", w: 50, mt: "mt-[2px]" },
  { n: "smart", label: "SmartSelect", w: 57, mt: "mt-[6px]" },
  { n: "rectf", label: "Rectangular Fence", w: 90, mt: "mt-[6px]", st: "on" },
  { n: "poly", label: "Polygon Fence", w: 70, mt: "mt-[2px]" },
  { n: "back", label: "Back [b]", w: 40, mt: "mt-[6px]", st: "off" },
  { n: "fwd", label: "Forward [n]", w: 53, mt: "mt-[2px]", st: "off" },
];
const Sheet3 = ({ y, f }: { y: number; f: string }) => <path d={`M6 ${y}h15l-5 5H1z`} fill={f} stroke="#8393a5" strokeWidth=".8" />;
const panelIcons: Record<string, React.ReactNode> = {
  opt: (<><path d="M5.500 2h14.500v18H5.500z" fill="#fff" stroke="#6d83c4" /><path d="M8 5.500h1.500M11 5.500h7M8 8.500h1.500M11 8.500h7M8 11.500h1.500M11 11.500h7M8 14.500h1.500M11 14.500h7" stroke="#5f78cc" /><path d="M13 17.500h5" stroke="#88b" /><path d="M2 2l5 4.500L2 10z" fill="#5bb0d8" stroke="#25709b" strokeWidth=".6" /></>),
  top: (<><Sheet3 y={15} f="#fff" /><Sheet3 y={11.500} f="#fff" /><Sheet3 y={7} f="#ffe169" /><path d="M10 0h3v4h3l-4.500 5L7 4h3z" fill="#53bde8" stroke="#1e7ba5" strokeWidth=".8" /></>),
  bot: (<><Sheet3 y={8.500} f="#ffdc4e" /><Sheet3 y={5} f="#fff" /><Sheet3 y={1} f="#fff" /><path d="M9 22v-4H6.500L10.500 13.500 15 18h-3v4z" fill="#53bde8" stroke="#1e7ba5" strokeWidth=".8" /></>),
  smart: (<><path d="M14 3l7-3-3 5h3l-9 8 2-5h-3z" fill="#ffe23c" stroke="#988418" strokeWidth=".8" /><path d="M3 5v14l3.300-3 2.700 5 2-1-2.500-5h4.500z" fill="#fff" stroke="#222" /></>),
  rectf: (<path d="M2 4.500h18M2 16.500h18M1.500 5v12M19.500 5v12" fill="none" stroke="#1f2f9f" strokeDasharray="1 1" />),
  poly: (<path d="M1 1.500h10M11.500 2v6M12 7.500h9M20.500 8v11M1 18.500h20M.5 2v17" fill="none" stroke="#1f2f9f" strokeDasharray="1 1" />),
  back: (<path d="M3 11l6-5v3h10v4.500H9V17z" fill="#e2e2e2" stroke="#777" />),
  fwd: (<path d="M19 11l-6-5v3H3v4.500h10V17z" fill="#e2e2e2" stroke="#777" />),
};
const BtnRow = ({ b }: { b: Btn }) => (
  <div className={`ml-[10px] flex h-[30px] items-center ${b.mt}`}>
    <div className={`grid h-[30px] w-[30px] place-items-center border ${b.st === "on" ? "border-[#2f7ab0] bg-[#d9ebf9]" : b.st === "off" ? "border-[#cacaca] bg-[#d8d8d8]" : "border-[#b8b8b8] bg-[#e9e9e9]"}`}>
      <svg viewBox="0 0 22 22" className="h-[22px] w-[22px] overflow-visible">{panelIcons[b.n]}</svg>
    </div>
    <div className={`ml-[28px] pt-[1px] ${b.st === "off" ? "text-[#a0a0a0]" : "text-[#3a3a3a]"}`}><Fit w={b.w}>{b.label}</Fit></div>
  </div>
);

function SelectPanel() {
  return (
    <aside className="h-[378px] w-[250px] shrink-0 border border-[#5b7cb6] bg-white font-['Liberation_Sans',sans-serif] text-[12px]">
      <div className="flex h-[18px] items-center bg-[#3985a1] pl-[5px] font-['Noto_Sans',sans-serif] text-white">
        <Fit w={31}>Select</Fit>
        <span className="ml-[179px] w-[10px] text-[16px] leading-[16px] font-semibold">?</span>
        <svg viewBox="0 0 9 9" className="ml-[6px] h-[9px] w-[9px]"><path d="M1 1l7 7M8 1L1 8" stroke="#fff" strokeWidth="2.200" /></svg>
      </div>
      <BtnRow b={btns[0]} />
      <div className="ml-[9px] mt-[5px] flex h-[21px] w-[158px] items-center justify-between border border-[#b5b5b5] bg-[#e6e6e6] pl-[3px] pr-[3px] text-[#222]">
        <Fit w={83}>Directional Fence</Fit>
        <svg viewBox="0 0 10 6" className="h-[6px] w-[10px]"><path d="M1 .5l4 4 4-4" fill="none" stroke="#555" /></svg>
      </div>
      {btns.slice(1).map((b) => <BtnRow key={b.n} b={b} />)}
      <div className="ml-[113px] mt-[6px] flex gap-[5px] text-[#999]">
        <div className="flex h-[20px] w-[58px] items-center gap-[1px] border border-[#cdcdcd] bg-[#d5d5d5] pl-[2px]">
          <svg viewBox="0 0 16 16" className="h-4 w-4"><rect x=".5" y="1" width="15" height="14" rx="1.500" fill="#b8b8b8" stroke="#999" /><path d="M4 8l3 4 6-8" stroke="#fff" strokeWidth="2.400" fill="none" /></svg>
          <Fit w={34}>Accept</Fit>
        </div>
        <div className="flex h-[20px] w-[66px] items-center gap-[1px] border border-[#cdcdcd] bg-[#d5d5d5] pl-[2px]">
          <svg viewBox="0 0 16 16" className="h-4 w-4"><rect x=".5" y="1" width="15" height="14" rx="1.500" fill="#8f8f8f" stroke="#888" /><path d="M4.500 5l7 6M11.500 5l-7 6" stroke="#fff" strokeWidth="2.600" /></svg>
          <Fit w={42}>Deselect</Fit>
        </div>
      </div>
    </aside>
  );
}

const dims: [number, number, number][] = [
  [515.5, 393, 457], [515.5, 457, 531], [598.5, 383, 457], [670.5, 372, 457], [768.5, 372, 457], [832.5, 457, 531], [902.5, 457, 521],
];
/* x, baseline, width, size, text */
const notes: [number, number, number, number, string][] = [
  [474, 387, 11, 16, "a′"], [472, 543, 8, 16, "a"], [591, 378, 10, 17, "b′"], [639, 370, 7, 17, "b"], [732, 367, 8, 17, "c′"],
  [738, 474, 6, 17, "c"], [824, 545, 9, 17, "d′"], [877, 537, 7, 17, "d"],
  [430, 449.500, 8, 8, "VP"], [427, 482, 15, 17, "HP"], [555, 450, 30, 17, "VPHP"], [699, 448, 14, 17, "VP"], [699, 476, 15, 17, "HP"],
  [796, 477, 30, 17, "VPHP"], [416, 460.500, 4, 9, "X"], [936, 459.500, 5, 9, "Y"],
];
const values: [number, number, string][] = [[513, 425, "30"], [513, 494.500, "35"], [596.500, 420.500, "35"], [668.500, 415, "40"], [766, 415, "40"], [830.500, 494.500, "35"], [900.500, 489.500, "30"]];

function Drawing() {
  return (
    <svg viewBox="352 232 634 450" className="absolute left-[352px] top-[10px] h-[450px] w-[634px]">
      <path d="M357 237h629v445H357z" fill="#a0a0a0" />
      <rect x="352.500" y="232.500" width="629" height="445" fill="#fff" stroke="#000" />
      <rect x="373" y="253" width="587" height="403" fill="none" stroke="#000" strokeWidth="2" />
      <path d="M425 457h508M483 393v138M617 383v74M649 372v85M742 372v85M848 457v75M883 457v65" stroke="#000" strokeWidth="2" />
      <path d="M482 393.500h37M482 531.500h37M595 383.500h23M648 372.500h26M741 372.500h31M829 531.500h20M882 521.500h24" stroke="#000" />
      {dims.map(([x, a, b], i) => (
        <g key={i}>
          <path d={`M${x} ${a}V${b}`} stroke="#000" />
          <path d={`M${x - 0.500} ${a + 4}h1l1 1v4h-3v-4zM${x - 0.500} ${b - 2}h1l1-1v-4h-3v4z`} fill="#000" />
        </g>
      ))}
      <g fontFamily="Open Sans, Noto Sans, sans-serif" fontWeight="300" fill="#000" stroke="#000" strokeWidth=".3">
        {notes.map(([x, y, w, s, t], i) => (
          <text key={i} x={x} y={y} fontSize={s} strokeWidth={s < 10 ? 0 : 0.300} textLength={w} lengthAdjust="spacingAndGlyphs">{t}</text>
        ))}
        {values.map(([x, y, t], i) => (
          <text key={i} transform={`translate(${x} ${y + 4}) rotate(-90)`} fontSize="9.500" strokeWidth=".1" fontWeight="400" textLength="8" lengthAdjust="spacingAndGlyphs">{t}</text>
        ))}
      </g>
    </svg>
  );
}

function SideStrip() {
  return (
    <aside className="flex w-[29px] shrink-0 flex-col items-center bg-[#f9fbfa] pl-[4px]">
      <svg viewBox="0 0 18 18" className="mt-[8px] h-[18px] w-[18px]"><path d="M1 .7h12v15.600H3L1 14z" fill="#5f9be0" stroke="#1f4a86" strokeWidth="1.200" /><path d="M3 1v15" stroke="#a8cdf5" /><path d="M11.500 10.500L17 17H6z" fill="#ffe76b" stroke="#7f7324" strokeWidth=".7" /></svg>
      <svg viewBox="0 0 20 18" className="mt-[16px] h-[18px] w-5"><path d="M.5.5h2v2h-2zM17.500.5h2v2h-2zM.5 15.500h2v2h-2zM17.500 15.500h2v2h-2z" fill="#8ab6ea" stroke="#1f4a86" /><rect x="5" y="2" width="7" height="8" fill="#fff" stroke="#1f4a86" strokeWidth="1.200" /><rect x="9" y="7" width="7" height="8" fill="#79aee9" stroke="#1f4a86" strokeWidth="1.200" /></svg>
      <div className="mt-[4px] h-[41px] text-[12px] text-[#222] [writing-mode:vertical-rl]"><span className="block leading-[14px] tracking-[-0.1px]">Groups</span></div>
      <svg viewBox="0 0 18 16" className="mt-[17px] h-4 w-[18px]"><path d="M3 4h14.300v11.300H3z" fill="#cfe2f5" stroke="#1f4a86" /><rect x=".7" y=".7" width="14.600" height="11.600" fill="#fff" stroke="#1f4a86" strokeWidth="1.200" /><path d="M3 8l4-5" stroke="#d43a3a" strokeWidth="1.300" /><circle cx="7.500" cy="8.500" r="2.200" fill="none" stroke="#2a9a2a" strokeWidth="1.200" /><path d="M10 3h3v3h-3z" fill="none" stroke="#3a7fd0" /></svg>
      <svg viewBox="0 0 20 18" className="mt-[17px] h-[18px] w-5 overflow-visible"><path d="M.7 1h6l2 3h10.600v13H.7z" fill="#eaf3fc" stroke="#1f4a86" strokeWidth="1.200" /><path d="M11 1h8M12 3h7" stroke="#d43a3a" strokeWidth="1.300" /><text x="6" y="15.500" fontSize="13" fontWeight="900" fontFamily="Noto Sans" fill="#1c62b0">?</text></svg>
    </aside>
  );
}

function DocTabs() {
  return (
    <div className="flex h-[32px] items-end justify-between border-b border-[#1b6685]">
      <div className="ml-[2px] flex h-[28px] w-[99px] items-center border-r border-[#aaa] bg-[#006487] text-[12px] text-white">
        <svg viewBox="0 0 16 16" className="ml-[17px] h-4 w-4"><path d="M2 0h11l2 2v13H2z" fill="#f1f1f1" /><path d="M5 3h4v4h5v5H5z" fill="#5aaae0" stroke="#215a90" /><circle cx="2" cy="9" r="1.800" fill="#8f4b16" /><circle cx="2" cy="13" r="2" fill="#6b3710" /></svg>
        <div className="ml-[3px]"><Fit w={32}>Draft1</Fit></div>
        <svg viewBox="0 0 9 9" className="ml-[18px] h-[9px] w-[9px]"><path d="M1 1l7 7M8 1L1 8" stroke="#fff" strokeWidth="2.200" /></svg>
      </div>
      <svg viewBox="0 0 54 12" className="mb-[10px] h-3 w-[54px]"><path d="M5.500 2.500v7l-4-3.500zM16.500 2.500v7l4-3.500z" fill="none" stroke="#444" /><path d="M27 4.500h8L31 8.500z" fill="#111" /><path d="M41.500 1.500l9 9M50.500 1.500l-9 9" stroke="#111" strokeWidth="1.800" /></svg>
    </div>
  );
}

const navs = ["M4 4v7M10 4v7L6 7.500z", "M9 4v7L5 7.500z", "M6 4v7l4-3.500z", "M11 4v7M5 4v7l4-3.500z"];
function SheetTabs() {
  return (
    <div className="flex h-[16px] border-t border-[#8a8a8a] bg-[#c0c0c0] shadow-[inset_0_1px_0_#222]">
      {navs.map((d) => (
        <svg key={d} viewBox="0 0 16 15" className="h-[15px] w-4 shrink-0"><rect x=".5" y=".5" width="15" height="14" fill="#f0f0f0" stroke="#8c8c8c" /><path d={d} fill="#aaa" stroke="#aaa" strokeWidth="1.200" /></svg>
      ))}
      <div className="relative h-[15px] w-[102px]">
        <svg viewBox="0 0 102 15" className="absolute inset-0 h-[15px] w-[102px]"><path d="M66 .5h33L93 14.500H62z" fill="#ffd9b0" stroke="#111" /><path d="M0 0h66L59.500 14.500H8z" fill="#fff" /><path d="M0 0l8 14.500h51.500L66 0" fill="none" stroke="#111" strokeWidth="1.200" /><rect x="74.500" y="3.500" width="11" height="9" fill="#fff" stroke="#1111cc" strokeWidth="1.200" /><path d="M77 9.500v-2h2M80 7h3v3h-3z" stroke="#888" fill="none" /><path d="M73 2l6 6M79 2l-6 6M72 5h8M76 1v8" stroke="#f00" /></svg>
        <div className="relative pl-[13px] pt-[2px] font-['Liberation_Sans',sans-serif] text-[12px] font-bold text-black"><Fit w={39}>Sheet 1</Fit></div>
      </div>
    </div>
  );
}

function StatusBar() {
  return (
    <div className="flex h-[20px] items-center bg-[#006487] text-[11px] text-white">
      <div className="ml-[745px] pt-px"><Fit w={103}>0 items are selected</Fit></div>
      <svg viewBox="0 0 336 20" className="ml-[182px] h-5 w-[336px]">
        <g fill="#f7f7f7" stroke="#222" strokeWidth=".8">
          <path d="M4 4h14v13H4zM70 4h14v13H70zM92 4h14v13H92z" />
        </g>
        <path d="M4 6.500h14M70 6.500h14M92 6.500h14" stroke="#555" />
        <path d="M5.500 8h7v6h-7z" fill="none" stroke={O} strokeWidth="1.300" /><circle cx="13.500" cy="10.500" r="3" fill="#fff" stroke="#222" /><path d="M15.500 13l3 4" stroke="#222" strokeWidth="1.600" />
        <circle cx="34.500" cy="8.500" r="5" fill="#fff" stroke="#222" /><path d="M32 7.500h5M34.500 5v5M32 11.500h5" stroke={O} strokeWidth="1.200" /><path d="M31 12l-5 5" stroke="#111" strokeWidth="2.500" /><path d="M31 12l-5 5" stroke="#ddd" />
        <circle cx="55.500" cy="8.500" r="5" fill="#fff" stroke="#222" /><path d="M52 12l-5 5" stroke="#111" strokeWidth="2.500" /><path d="M52 12l-5 5" stroke="#ddd" /><path d="M57 2h5l-2 4h3l-9 7 2-5h-3z" fill="#fdc10c" stroke="#555" strokeWidth=".6" />
        <path d="M72 11V9h2M80 9h2v2M72 13v2h2M80 15h2v-2M73.500 9.500l2 1.500M80.500 9.500l-2 1.500M73.500 15l2-2M80.500 15l-2-2" stroke="#222" fill="none" /><path d="M94 11.500h10M97 8.500l-3 3 3 3M101 8.500l3 3-3 3" stroke="#222" fill="none" />
        <circle cx="121.500" cy="11" r="6.300" fill="#f0ede8" stroke="#bbb" /><path d="M117.500 11.500h8" stroke={O} strokeWidth="1.300" />
        <path d="M132 12.500h112" stroke="#fff" /><path d="M180 6h7v7l-3.500 3-3.500-3z" fill="#eee" stroke="#999" /><path d="M183.500 8v5" stroke="#c99" />
        <circle cx="253.500" cy="11" r="6.300" fill="#f0ede8" stroke="#bbb" /><path d="M249.500 11.500h8M253.500 7v8" stroke={O} strokeWidth="1.300" />
        <rect x="269.500" y="5.500" width="15.500" height="12" rx="2.500" fill="#f10f14" /><path d="M275.500 8.500v6l4.500-3z" fill="#fff" />
        <circle cx="301" cy="11" r="6.800" fill="#eee" stroke="#999" /><circle cx="301" cy="11" r="3.200" fill="#d3111b" />
        <rect x="318" y="4" width="14" height="14" rx="2" fill="#fff" stroke="#ccc" strokeWidth=".6" /><path d="M325 14V7M322 9.500L325 6.500l3 3M320.500 13.500V16h9v-2.500" stroke="#d3111b" strokeWidth="1.300" fill="none" />
      </svg>
    </div>
  );
}

function Taskbar() {
  return (
    <footer className="flex h-[40px] items-center bg-gradient-to-r from-[#cfe8f0] via-[#d2e3ee] to-[#d6deea] text-[12px] text-[#111]">
      <div className="grid w-[48px] place-items-center">
        <svg viewBox="0 0 16 16" className="h-4 w-4"><path d="M0 2.300l6.500-.9v6.200H0zM7.300 1.300L16 0v7.600H7.300zM0 8.400h6.500v6.200L0 13.700zM7.300 8.400H16V16l-8.700-1.300z" fill="#000" /></svg>
      </div>
      <div className="flex h-[40px] w-[288px] items-center border border-[#b9c5cb] bg-white">
        <svg viewBox="0 0 16 16" className="ml-[12px] h-4 w-4"><circle cx="10" cy="6" r="5" fill="none" stroke="#111" strokeWidth="1.300" /><path d="M6.500 9.500l-6 6" stroke="#111" strokeWidth="1.300" /></svg>
        <div className="ml-[11px] pt-[2px] text-[14px] text-[#333]"><Fit w={128}>Type here to search</Fit></div>
      </div>
      <div className="grid h-[40px] grid-cols-[49px_50px_49px_49px_50px_44px] place-items-center">
        <svg viewBox="0 0 16 16" className="mr-[2px] h-4 w-4"><path d="M.5 3.500V.7h10v2.800M.5 12.500v2.800h10v-2.800" fill="none" stroke="#111" strokeWidth="1.200" /><path d="M.6 5h9.800v6H.6z" fill="none" stroke="#111" strokeWidth="1.200" /><path d="M14.500 0v4M14.500 8.500V16" stroke="#111" /><path d="M13 5h3v3h-3z" fill="#111" /></svg>
        <svg viewBox="0 0 22 22" className="h-[22px] w-[22px]"><path d="M0 1h8l2 3h11v7H0z" fill="#e6a51a" /><path d="M0 4h22v15H0z" fill="#ffd766" /><path d="M4 20v-5c0-2 1-3 3-3h8c2 0 3 1 3 3v5h-4v-3H8v3z" fill="#3893df" /></svg>
        <svg viewBox="0 0 24 24" className="h-6 w-6"><circle cx="12" cy="12" r="12" fill="#1678cc" /><path d="M1 9C3 3 8 0 13 0c8 1 12 8 11 13-1 4-7 5-10 3 3-3 1-7-3-8-4 0-8 1-10 1z" fill="#3dc5a0" /><path d="M1 9C3 3 8 0 13 0c4 0 6 2 8 4-7-2-13 1-14 4z" fill="#32b8dd" /><path d="M8 11c-2 6 2 12 9 11 3-1 5-2 6-5-4 2-10 2-11-3z" fill="#0c4b9b" /><path d="M11 11c-2 3 0 7 5 7 3 0 6-1 7-3-3 2-8 2-9 1 2-2 0-5-3-5z" fill="#d3e7f0" /></svg>
        <svg viewBox="0 0 24 24" className="h-6 w-6"><path d="M10 4C3 5-1 12 1 17c2 6 8 7 13 5 4-2 2-5 5-7 4-4-1-12-9-11z" fill="#c5e2ef" stroke="#6e95aa" strokeWidth=".8" /><circle cx="6" cy="9" r="2" fill="#dd4433" /><circle cx="12" cy="7" r="1.800" fill="#3a9b46" /><circle cx="4.500" cy="14.500" r="2" fill="#f1b52b" /><circle cx="9" cy="18.500" r="2" fill="#4a62cc" /><path d="M22 1L13 16" stroke="#b36b25" strokeWidth="2.200" /><path d="M14 14c-4 1-2 4-6 6 5 2 8-1 8-5z" fill="#e39a3b" /></svg>
        <svg viewBox="0 0 24 24" className="h-6 w-6"><defs><linearGradient id="gr" x1="0" y1="0" x2=".5" y2="1"><stop offset="0" stopColor="#f58a2c" /><stop offset=".5" stopColor="#c4507a" /><stop offset="1" stopColor="#8a4ecf" /></linearGradient></defs><circle cx="12" cy="12" r="12" fill="url(#gr)" /><circle cx="12" cy="12.500" r="9.800" fill="#2b2b2f" /><circle cx="12" cy="12.500" r="4" fill="#eee" /><circle cx="12" cy="12.500" r="1.500" fill="#333" /><path d="M16 1l6 6-3 1" fill="none" stroke="#2b2b2f" strokeWidth="2.500" /></svg>
        <div className="flex h-[40px] w-[44px] border-b-2 border-[#2e93cc] bg-[#ecf4f8] pl-[15px] pt-[8px]">
          <div className="grid h-[21px] w-[21px] place-items-center bg-[#2747a8] pt-[2px] text-[11px] font-semibold text-white shadow-[-3px_3px_0_#12919b]"><Fit w={12}>SE</Fit></div>
        </div>
      </div>
      <div className="ml-auto flex items-center">
        <svg viewBox="0 0 98 18" className="h-[18px] w-[98px]" fill="none" stroke="#111" strokeWidth="1.200">
          <path d="M4 12l6-6 6 6" /><path d="M26 6.500h3l4-3.500v12l-4-3.500h-3zM36 6.500l4 4.500M40 6.500L36 11" />
          <circle cx="58" cy="9" r="7" /><path d="M51 9h14M52.500 5h11M52.500 13h5M58 2c-4 4-4 10 0 14M58 2c3 3 4 5 3.500 7" /><circle cx="62.500" cy="13" r="3.600" fill="#d5e0eb" /><path d="M60 10.500l5 5" />
          <rect x="75" y="3" width="21.500" height="12" /><path d="M77 6.500h18M77 9.500h18" strokeDasharray="1.500 1.200" /><path d="M79 12.500h14" />
        </svg>
        <div className="ml-[10px]"><Fit w={23}>ENG</Fit></div>
        <div className="ml-[13px] flex h-[31px] w-[57px] flex-col items-center justify-between">
          <Fit w={27}>12:50</Fit>
          <Fit w={57}>19-04-2023</Fit>
        </div>
        <svg viewBox="0 0 28 26" className="ml-[18px] mt-[3px] h-[26px] w-[28px]"><path d="M1 2h16v13H8l-3 4v-4H1z" fill="#000" /><path d="M4 5.500h10M4 8.500h10M4 11.500h7" stroke="#fff" strokeWidth="1.200" /><circle cx="16" cy="17.500" r="7.500" fill="#dfe3e6" stroke="#666" /><text x="12.700" y="22" fontSize="12" fontWeight="600" fontFamily="Noto Sans" fill="#111">8</text></svg>
        <div className="ml-[9px] h-[40px] w-[5px] border-l border-[#a9b3bd]" />
      </div>
    </footer>
  );
}

export default function App() {
  return (
    <div className="flex h-[768px] w-[1366px] flex-col overflow-hidden bg-white font-['Noto_Sans','Open_Sans',sans-serif] leading-none">
      <TitleBar />
      <Ribbon />
      <CommandBar />
      <div className="flex h-[543px]">
        <main className="flex w-[1337px] shrink-0 flex-col">
          <div className="flex h-[25px] items-center border-b-2 border-[#d2d2d2]">
            <svg viewBox="0 0 20 9" className="ml-[5px] h-[9px] w-5"><rect x=".5" y=".5" width="19" height="8" fill="#dce9f8" stroke="#3a78bc" /><path d="M0 1h20" stroke="#2d66ac" strokeWidth="2" /><path d="M3 5.500h14" stroke="#7291bd" strokeWidth="2" strokeDasharray="2 1" /></svg>
            <div className="ml-[10px] flex h-[21px] w-[1296px] items-center self-start border-l border-t border-[#9c9c9c] pl-px text-[12px] text-black">
              <Fit w={1013}>Click elements, drag right for inside fence, drag left for inside/overlapping fence, or Alt+click to place first vertex of polygon fence. Press Esc to clear the display of keypoints.</Fit>
            </div>
          </div>
          <DocTabs />
          <div className="relative h-[470px]">
            <SelectPanel />
            <Drawing />
          </div>
          <SheetTabs />
        </main>
        <SideStrip />
      </div>
      <StatusBar />
      <Taskbar />
    </div>
  );
}
